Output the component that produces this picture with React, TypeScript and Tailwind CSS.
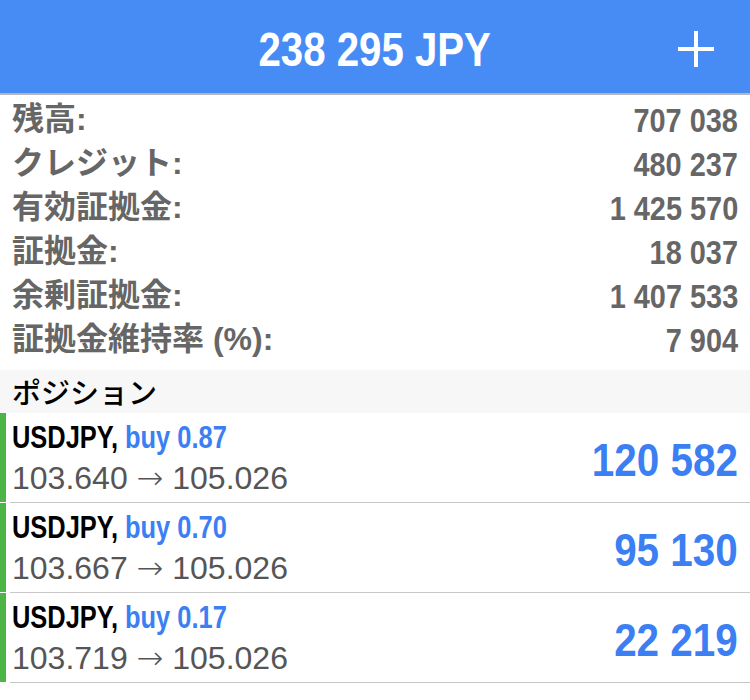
// No condensed Helvetica here: Liberation Sans Bold squeezed horizontally stands in for it.
const cond = "font-['Liberation_Sans',sans-serif] font-bold inline-block"

const summary = [
  { label: "残高:", value: "707 038" },
  { label: "クレジット:", value: "480 237" },
  { label: "有効証拠金:", value: "1 425 570" },
  { label: "証拠金:", value: "18 037" },
  { label: "余剰証拠金:", value: "1 407 533" },
  { label: "証拠金維持率 (%):", value: "7 904" },
]

const positions = [
  { symbol: "USDJPY,", side: "buy 0.87", open: "103.640", current: "105.026", profit: "120 582" },
  { symbol: "USDJPY,", side: "buy 0.70", open: "103.667", current: "105.026", profit: "95 130" },
  { symbol: "USDJPY,", side: "buy 0.17", open: "103.719", current: "105.026", profit: "22 219" },
]

export default function App() {
  return (
    <div className="w-[750px] h-[700px] bg-white overflow-hidden">
      {/* Header */}
      <div className="h-[93px] bg-[#478cf5] grid grid-cols-[1fr_auto_1fr] items-center">
        <div />
        <div className={`${cond} scale-x-[0.82] origin-center text-white text-[49px] leading-none pt-[5px]`}>
          238 295 JPY
        </div>
        <div className="flex justify-end pr-[36px] pt-[5px]">
          <svg width="36" height="36" viewBox="0 0 36 36">
            <path d="M18 0V36M0 18H36" stroke="white" strokeWidth="4" />
          </svg>
        </div>
      </div>
      <div className="h-[2px] bg-[#b8b8b8]" />

      {/* Account summary */}
      <div className="pt-[2px] pb-[9px]">
        {summary.map((row) => (
          <div key={row.label} className="h-[44px] flex items-center justify-between pl-[12px] pr-[12px] text-[#666666]">
            <span className="font-['Liberation_Sans','Noto_Sans_CJK_JP',sans-serif] font-bold text-[32px] leading-none">
              {row.label}
            </span>
            <span className={`${cond} scale-x-[0.85] origin-right text-[34px] leading-none pt-[2px]`}>{row.value}</span>
          </div>
        ))}
      </div>

      {/* Positions section */}
      <div className="h-[43px] bg-[#f7f7f7] flex items-center pl-[12px]">
        <span className="font-['Noto_Sans_CJK_JP',sans-serif] font-medium text-[29px] leading-none text-black">ポジション</span>
      </div>

      {positions.map((p) => (
        <div key={p.open} className="flex h-[90px]">
          <div className="w-[6px] h-[89px] bg-[#4db546]" />
          <div className="flex-1 ml-[4px] border-b border-[#c8c8c8] flex items-center justify-between pl-[2px] pr-[12px]">
            <div className="flex flex-col">
              <div className={`${cond} scale-x-[0.82] origin-left text-[31px] leading-[40px]`}>
                <span className="text-black">{p.symbol}</span>{" "}
                <span className="text-[#3b7ff2]">{p.side}</span>
              </div>
              <div className="font-['Liberation_Sans',sans-serif] text-[32px] leading-[40px] text-[#555555]">
                {p.open} <span className="font-['DejaVu_Sans',sans-serif] font-extralight">→</span> {p.current}
              </div>
            </div>
            <div className={`${cond} scale-x-[0.86] origin-right text-[47px] leading-none text-[#3b7ff2] pt-[3px]`}>
              {p.profit}
            </div>
          </div>
        </div>
      ))}
    </div>
  )
}
